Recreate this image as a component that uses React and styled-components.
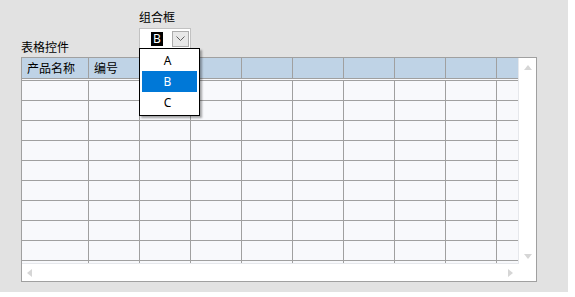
import styled, { createGlobalStyle } from 'styled-components';

const GlobalStyle = createGlobalStyle`
    body {
        margin: 0;
        background: #ffffff;
        font-family: "Noto Sans CJK SC", "Noto Sans", sans-serif;
        font-size: 12px;
        color: #000;
    }
`

const Form = styled.div`
    width: 568px;
    height: 292px;
    box-sizing: border-box;
    padding-left: 21px;
    background: #e2e2e2;
    display: flex;
    flex-direction: column;
`

const TopRow = styled.div`
    display: flex;
    align-items: flex-end;
    height: 57px;
`

const Label = styled.div`
    font-size: 12px;
    line-height: 16px;
    white-space: nowrap;
`

const TableLabel = styled(Label)`
    width: 118px;
    margin-bottom: 2px;
`

const ComboGroup = styled.div`
    display: flex;
    flex-direction: column;
    gap: 3px;
    margin-bottom: 8px;
`

const ComboBox = styled.div`
    position: relative;
    width: 52px;
    height: 21px;
    box-sizing: border-box;
    border: 1px solid #c2c2c2;
    background: #fff;
    display: flex;
    align-items: center;
    justify-content: space-between;
    padding: 0 1px 0 11px;
`

const SelectedText = styled.span`
    background: #000;
    color: #fff;
    font-family: "Noto Sans", sans-serif;
    font-size: 12px;
    line-height: 14px;
    height: 14px;
    padding: 0 2px;
`

const ArrowButton = styled.div`
    width: 17px;
    height: 16px;
    box-sizing: border-box;
    border: 1px solid #adadad;
    background: #e8e8e8;
    display: flex;
    align-items: center;
    justify-content: center;
`

const Dropdown = styled.div`
    position: absolute;
    top: 19px;
    left: -1px;
    width: 61px;
    box-sizing: border-box;
    border: 1px solid #000;
    background: #fff;
    padding: 1px 2px 2px;
    box-shadow: 2px 2px 2px rgba(0, 0, 0, 0.35);
    z-index: 10;
`

const Option = styled.div`
    height: 21px;
    line-height: 21px;
    text-align: center;
    padding-right: 4px;
    font-family: "Noto Sans", sans-serif;
    font-size: 12px;
    background: ${p => p.$selected ? '#0078d7' : 'transparent'};
    color: ${p => p.$selected ? '#fff' : '#000'};
`

const TableBox = styled.div`
    width: 516px;
    height: 225px;
    box-sizing: border-box;
    border: 1px solid #a0a0a0;
    background: #fff;
    display: grid;
    grid-template-columns: 497px 17px;
    grid-template-rows: 206px 17px;
`

const Grid = styled.div`
    overflow: hidden;
    background: #f8f9fc;
    border-right: 1px solid #e6e8ec;
    border-bottom: 1px solid #e6e8ec;
`

const HeaderRow = styled.div`
    display: flex;
    background: #bfd3e6;
    border-bottom: 1px solid #a0a0a0;
`

const HeaderCell = styled.div`
    flex-shrink: 0;
    width: ${p => p.$w}px;
    height: 20px;
    box-sizing: border-box;
    border-right: 1px solid #a0a0a0;
    padding-left: 5px;
    line-height: 19px;
    white-space: nowrap;
`

const Body = styled.div`
    margin-top: 1px;
    border-top: 1px solid #a0a0a0;
`

const Row = styled.div`
    display: flex;
    height: 20px;
    box-sizing: border-box;
    border-bottom: 1px solid #a0a0a0;
`

const Cell = styled.div`
    flex-shrink: 0;
    width: ${p => p.$w}px;
    box-sizing: border-box;
    border-right: 1px solid #a0a0a0;
`

const VScroll = styled.div`
    display: flex;
    flex-direction: column;
    align-items: center;
    justify-content: space-between;
    padding: 7px 0 5px;
    box-sizing: border-box;
`

const HScroll = styled.div`
    display: flex;
    align-items: center;
    justify-content: space-between;
    padding: 0 6px 0 5px;
`

const ARROW = '#d6d6d6'

const Triangle = ({ dir }) => {
    const pts = {
        up: '0,5 4,0 8,5',
        down: '0,0 8,0 4,5',
        left: '5,0 5,8 0,4',
        right: '0,0 5,4 0,8',
    }[dir]
    const horiz = dir === 'up' || dir === 'down'
    return (
        <svg width={horiz ? 8 : 5} height={horiz ? 5 : 8} style={{ display: 'block' }}>
            <polygon points={pts} fill={ARROW} />
        </svg>
    )
}

const widths = [67, 51, 51, 51, 51, 51, 51, 51, 51, 51]
const headers = ['产品名称', '编号']

const App = () => (
    <>
        <GlobalStyle />
        <Form>
            <TopRow>
                <TableLabel>表格控件</TableLabel>
                <ComboGroup>
                    <Label>组合框</Label>
                    <ComboBox>
                        <SelectedText>B</SelectedText>
                        <ArrowButton>
                            <svg width="9" height="5" viewBox="0 0 9 5">
                                <polyline points="0.5,0.5 4.5,4.5 8.5,0.5" fill="none" stroke="#606060" strokeWidth="1" />
                            </svg>
                        </ArrowButton>
                        <Dropdown>
                            <Option>A</Option>
                            <Option $selected>B</Option>
                            <Option>C</Option>
                        </Dropdown>
                    </ComboBox>
                </ComboGroup>
            </TopRow>
            <TableBox>
                <Grid>
                    <HeaderRow>
                        {widths.map((w, i) => (
                            <HeaderCell key={i} $w={w}>{headers[i] || ''}</HeaderCell>
                        ))}
                    </HeaderRow>
                    <Body>
                        {Array.from({ length: 10 }).map((_, r) => (
                            <Row key={r}>
                                {widths.map((w, i) => <Cell key={i} $w={w} />)}
                            </Row>
                        ))}
                    </Body>
                </Grid>
                <VScroll>
                    <Triangle dir="up" />
                    <Triangle dir="down" />
                </VScroll>
                <HScroll>
                    <Triangle dir="left" />
                    <Triangle dir="right" />
                </HScroll>
                <div />
            </TableBox>
        </Form>
    </>
)

export default App
